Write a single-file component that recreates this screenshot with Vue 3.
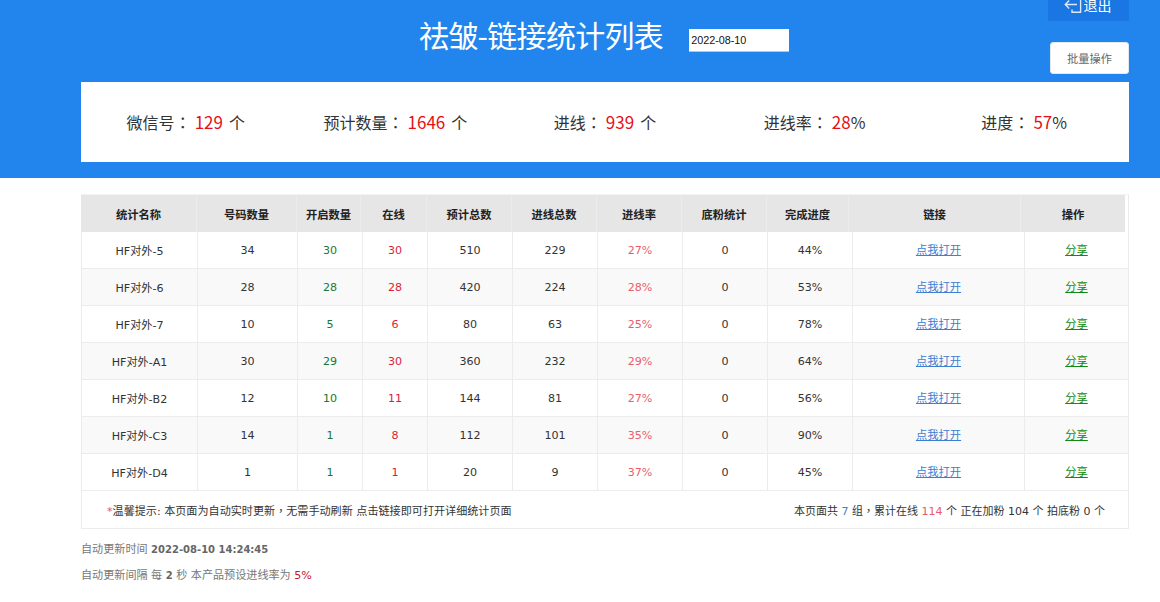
<script setup>
const stats = [
  { label: '微信号', value: '129', unit: '个', unitClass: 'unit-gap' },
  { label: '预计数量', value: '1646', unit: '个', unitClass: 'unit-gap' },
  { label: '进线', value: '939', unit: '个', unitClass: 'unit-gap' },
  { label: '进线率', value: '28', unit: '%', unitClass: '' },
  { label: '进度', value: '57', unit: '%', unitClass: '' }
]
const headers = ['统计名称', '号码数量', '开启数量', '在线', '预计总数', '进线总数', '进线率', '底粉统计', '完成进度', '链接', '操作']
const rows = [
  ['HF对外-5', 34, 30, 30, 510, 229, '27%', 0, '44%'],
  ['HF对外-6', 28, 28, 28, 420, 224, '28%', 0, '53%'],
  ['HF对外-7', 10, 5, 6, 80, 63, '25%', 0, '78%'],
  ['HF对外-A1', 30, 29, 30, 360, 232, '29%', 0, '64%'],
  ['HF对外-B2', 12, 10, 11, 144, 81, '27%', 0, '56%'],
  ['HF对外-C3', 14, 1, 8, 112, 101, '35%', 0, '90%'],
  ['HF对外-D4', 1, 1, 1, 20, 9, '37%', 0, '45%']
]
const cellClass = ['', '', 'green', 'red', '', '', 'rate', '', '']
</script>

<template>
  <div class="page">
    <header class="hero">
      <div class="hero-top">
        <h1 class="title">祛皱-链接统计列表</h1>
        <input class="date" type="text" value="2022-08-10" />
        <div class="actions">
          <button class="logout" type="button">
            <svg class="logout-icon" viewBox="0 0 18 18" width="18" height="18" fill="none" stroke="#dbe9fb" stroke-width="1.4">
              <path d="M8 3.5V0.7h8.6v15.6H8v-2.8" />
              <path d="M13 8.5H1.5M5.2 4.6L1.3 8.5l3.9 3.9" />
            </svg>
            <span>退出</span>
          </button>
          <button class="batch" type="button">批量操作</button>
        </div>
      </div>
      <div class="stats">
        <div v-for="s in stats" :key="s.label" class="stat">
          {{ s.label }}<span class="tc">：</span><span class="stat-num">{{ s.value }}</span><span :class="s.unitClass">{{ s.unit }}</span>
        </div>
      </div>
    </header>

    <main class="content">
      <section class="board">
        <div class="grid-head">
          <div v-for="h in headers" :key="h" class="hcell">{{ h }}</div>
        </div>
        <div v-for="(row, i) in rows" :key="row[0]" class="grid-row" :class="{ odd: i % 2 === 1 }">
          <div v-for="(c, j) in row" :key="j" class="cell" :class="cellClass[j]">{{ c }}</div>
          <div class="cell"><a class="link" href="#">点我打开</a></div>
          <div class="cell last"><a class="share" href="#">分享</a></div>
        </div>
        <div class="tip-row">
          <div><span class="star">*</span>温馨提示: 本页面为自动实时更新<span class="tc">，</span>无需手动刷新 点击链接即可打开详细统计页面</div>
          <div class="summary">本页面共 <span class="blue">7</span> 组<span class="tc">，</span>累计在线 <span class="pink">114</span> 个 正在加粉 104 个 拍底粉 0 个</div>
        </div>
      </section>
      <p class="note first">自动更新时间 <b>2022-08-10 14:24:45</b></p>
      <p class="note">自动更新间隔 每 <b>2</b> 秒 本产品预设进线率为 <span class="note-red">5%</span></p>
    </main>
  </div>
</template>

<style>
html, body { margin: 0; background: #fff; }
</style>

<style scoped>
.page {
  font-family: "DejaVu Sans", "Noto Sans CJK SC", sans-serif;
  font-size: 11.1px;
  color: #333;
  height: 602px;
  overflow: hidden;
}
.tc { font-family: "Noto Sans CJK TC", sans-serif; }
.hero {
  background: #2185ed;
  height: 178px;
  box-sizing: border-box;
  padding: 0 31px 0 81px;
}
.hero-top {
  display: flex;
  height: 82px;
  padding-left: 338px;
}
.title {
  margin: 12px 0 0;
  height: 44px;
  font: 400 30px/44px "Noto Sans CJK SC", sans-serif;
  color: #fff;
  letter-spacing: -0.7px;
}
.date {
  margin: 29px 0 0 26px;
  width: 100px;
  height: 23px;
  box-sizing: border-box;
  padding: 0 2px;
  border: 0;
  border-bottom: 1px solid #b9c6d6;
  border-radius: 0;
  background: #fff;
  color: #111;
  font: 10.8px "Liberation Sans", sans-serif;
}
.actions {
  margin-left: auto;
  width: 81px;
  display: flex;
  flex-direction: column;
  align-items: flex-end;
}
.logout {
  margin-top: -11px;
  width: 81px;
  height: 32px;
  padding: 0 2px 0 0;
  border: 0;
  background: #1a76e2;
  color: #fff;
  display: flex;
  align-items: center;
  justify-content: center;
  gap: 2px;
  font: 14px/20px "Noto Sans CJK SC", sans-serif;
  flex: none;
}
.logout-icon { flex: none; }
.batch {
  margin-top: 21px;
  width: 79px;
  height: 32px;
  padding: 0;
  border: 1px solid #e3e8ee;
  border-radius: 3px;
  background: #fff;
  color: #666;
  font: 11.2px "Noto Sans CJK SC", sans-serif;
  flex: none;
}
.stats {
  height: 80px;
  box-sizing: border-box;
  padding-bottom: 1px;
  background: #fff;
  display: grid;
  grid-template-columns: repeat(5, 1fr);
  align-items: center;
  text-align: center;
  font: 16px/24px "Noto Sans CJK SC", sans-serif;
  color: #333;
}
.stat-num { color: #e60f17; margin-left: 4px; font-size: 17px; }
.unit-gap { margin-left: 6px; }
.content { padding: 16px 31px 0 81px; }
.board {
  border: 1px solid #ececec;
  border-top-color: #f3f3f3;
}
.grid-head {
  display: grid;
  grid-template-columns: 116px 100px 64px 66px 85px 85px 85px 85px 82px 172px 1fr;
  height: 37px;
  margin-right: 3px;
  margin-left: -1px;
}
.hcell {
  background: #e6e6e6;
  border-right: 1px solid #ececec;
  display: flex;
  align-items: center;
  justify-content: center;
  font: 700 11.3px "Noto Sans CJK SC", sans-serif;
  color: #222;
}
.hcell:last-child { border-right: 0; }
.grid-row {
  display: grid;
  grid-template-columns: 117px 100px 65px 65px 85px 85px 85px 85px 85px 172px 1fr;
  height: 37px;
  box-sizing: border-box;
  border-bottom: 1px solid #ececec;
  margin-left: -1px;
  margin-right: -1px;
}
.grid-row.odd { background: #f9f9f9; }
.cell {
  border-right: 1px solid #ececec;
  display: flex;
  align-items: center;
  justify-content: center;
  color: #333;
}
.cell.last { border-right: 1px solid #ececec; }
.cell:first-child { border-left: 1px solid #ececec; }
.green { color: #22762f; }
.red { color: #d81e3a; }
.rate { color: #e8606e; }
.link, .share { margin-bottom: 2px; font-size: 11.3px; text-decoration: underline; }
.link { color: #3b80d3; }
.share { color: #128a12; }
.tip-row {
  height: 37px;
  display: flex;
  align-items: center;
  justify-content: space-between;
  padding: 0 23px 0 25px;
  color: #333;
}
.summary { font-size: 11px; }
.star { color: #e0505f; }
.blue { color: #4a7fc4; }
.pink { color: #e65c6c; }
.note {
  margin: 0;
  height: 26px;
  line-height: 26px;
  color: #777;
}
.note.first { margin-top: 8px; }
.note b { color: #666; font-size: 10px; }
.note-red { color: #c9171e; }
</style>
